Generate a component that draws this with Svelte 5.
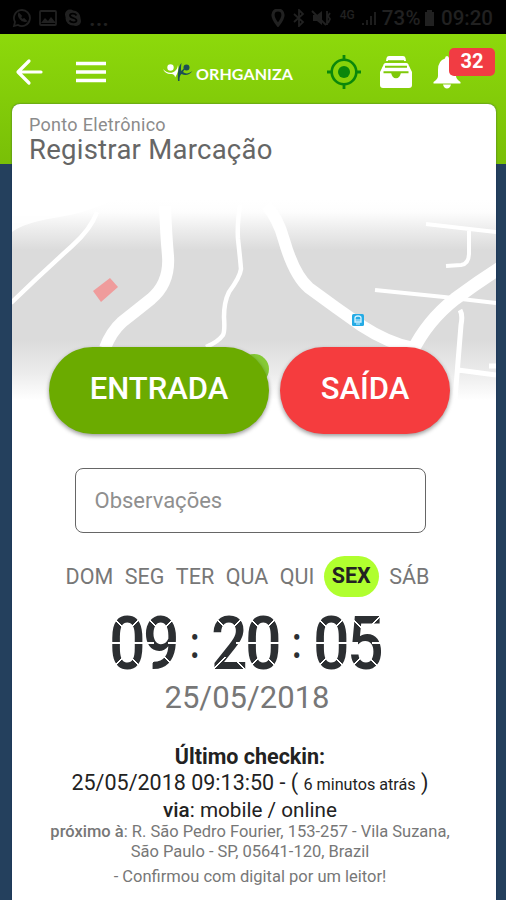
<script lang="ts">
    const days = ['DOM', 'SEG', 'TER', 'QUA', 'QUI', 'SEX', 'SÁB'];
    const today = 'SEX';
    const time = '09:20:05';

    let note = $state('');
    let unread = $state(32);
</script>

<div class="screen">
    <div class="status">
        <div class="status-left">
            <svg width="20" height="20" viewBox="0 0 20 20"><path d="M2 18l1-4a8 8 0 1 1 3 3zM7 6c-1 3 3 8 7 7l-2-2-2 1-2-3 1-1z" /></svg>
            <svg width="18" height="18" viewBox="0 0 18 18"><rect x="1" y="2" width="16" height="14" rx="1" /><path class="solid" d="M2 14l4-5 3 3 3-4 5 6z" /></svg>
            <svg width="18" height="20" viewBox="0 0 18 20"><circle class="solid" cx="6" cy="6.500" r="5" /><circle class="solid" cx="12" cy="13" r="5" /><circle class="solid" cx="9" cy="10" r="7.500" /><path class="cut" d="M12.500 7.500C11 5 6 5 6 7.500c0 3 6.500 2 6.500 5 0 2.500-5.500 2.500-7 0" /></svg>
            <span class="dots">...</span>
        </div>
        <div class="status-right">
            <svg width="14" height="18" viewBox="0 0 14 18"><path class="pin" d="M7 16C3 11 2 9 2 6a5 5 0 0 1 10 0c0 3-1 5-5 10z" /></svg>
            <svg class="bt" width="14" height="18" viewBox="0 0 14 18"><path d="M2 5l9 8-4 4V1l4 4-9 8" /></svg>
            <svg class="mute" width="20" height="18" viewBox="0 0 20 18"><path class="solid" d="M2 6h4l5-4v14l-5-4H2z" /><path d="M1 2l14 14M16 2v14M19 4l-2 3 2 3-2 4" /></svg>
            <span class="net">4G</span>
            <svg width="17" height="18" viewBox="0 0 17 18"><path d="M2 14v2M6 11v5M10 7v9M14 3v13" /></svg>
            <span class="percent">73%</span>
            <svg class="battery" width="11" height="18" viewBox="0 0 11 18"><path class="solid" d="M3 1h5v2h2v14H1V3h2z" /></svg>
            <span>09:20</span>
        </div>
    </div>

    <header class="bar">
        <button class="icon back" aria-label="Voltar">
            <svg width="28" height="28" viewBox="0 0 28 28"><path d="M14 3L3 14l11 11M3.500 14H26" fill="none" stroke="#fff" stroke-width="3.200" stroke-linecap="round" stroke-linejoin="round" /></svg>
        </button>
        <button class="icon menu" aria-label="Menu">
            <svg width="30" height="22" viewBox="0 0 30 22"><path d="M0 2.500h30M0 11h30M0 19.500h30" stroke="#fff" stroke-width="3.400" /></svg>
        </button>
        <div class="brand">
            <svg width="30" height="20" viewBox="0 0 30 20">
                <circle cx="7.500" cy="5.500" r="3.200" fill="#fff" />
                <circle cx="23.500" cy="5.500" r="3" fill="#1d5054" />
                <path d="M0 7c3 4 9 5 12 2 2-2 2.500-3 3-6 1 5-.5 9-3 12.500 0-2-1-3-3-3.500C5 12.500 1.500 11 0 7z" fill="#fff" />
                <path d="M18.500 1c-3 3-4 9-3.500 18h1.500c0-4 .5-6 2-7 4 2 8 1 11-3-4 3-7 3-9.500 1 1-2 2-3 2.500-6-1.500 2-2.500 4-4.500 5 0-3 0-5 .5-8z" fill="#1d5054" />
            </svg>
            <span>ORHGANIZA</span>
        </div>
        <button class="icon target" aria-label="Localização">
            <svg width="34" height="34" viewBox="0 0 34 34"><circle cx="17" cy="17" r="12.300" fill="none" stroke="#0b870b" stroke-width="2.600" /><circle cx="17" cy="17" r="6" fill="#0b870b" /><path d="M17 0v6M17 28v6M0 17h6M28 17h6" stroke="#0b870b" stroke-width="2.800" /></svg>
        </button>
        <button class="icon inbox" aria-label="Arquivo">
            <svg width="34" height="34" viewBox="0 0 34 34">
                <path d="M10 1h14q2 0 2.500 2l.5 3H7l.5-3Q8 1 10 1zM6.500 8h21q1.500 0 2 1.500L30.500 13h-27l1-3.500q.5-1.500 2-1.500z" fill="#fff" />
                <path d="M4 11h26l3 6v13q0 3-3 3H4q-3 0-3-3V17z" fill="#fff" />
                <path d="M9 6.300h16M6 11.800h22M4.500 17.300h25" fill="none" stroke="#7fc909" stroke-width="1.900" />
                <path d="M12 17.300h10q-1 6-5 6t-5-6z" fill="#7fc909" />
            </svg>
        </button>
        <button class="icon bell" aria-label="Notificações">
            <svg width="28" height="34" viewBox="0 0 28 34"><path d="M14 1q2 0 2 2.500 7 2 7 11.500v6q0 3 4.500 6v1.500H.5V27Q5 24 5 21v-6Q5 5.500 12 3.500 12 1 14 1zM10 29.500h8q-1 4-4 4t-4-4z" fill="#fff" /></svg>
            {#if unread > 0}
                <span class="badge">{unread}</span>
            {/if}
        </button>
    </header>

    <main class="card">
        <div class="heading">
            <h2>Ponto Eletrônico</h2>
            <h1>Registrar Marcação</h1>
        </div>

        <div class="map">
            <svg width="484" height="200" viewBox="12 200 484 200">
                <defs>
                    <linearGradient id="land" x1="0" y1="0" x2="0" y2="1">
                        <stop offset="0" stop-color="#fff" />
                        <stop offset=".06" stop-color="#fdfdfd" />
                        <stop offset=".14" stop-color="#eee" />
                        <stop offset=".25" stop-color="#dbdbdb" />
                        <stop offset=".7" stop-color="#dbdbdb" />
                        <stop offset=".86" stop-color="#ebebeb" />
                        <stop offset="1" stop-color="#fff" />
                    </linearGradient>
                </defs>
                <rect x="12" y="200" width="484" height="200" fill="url(#land)" />
                <path d="M12 200h102q-30 14-60 18-30 5-42 14z" fill="#fff" opacity=".85" />
                <g class="roads">
                    <path d="M97 212q-6 17-25 34-30 27-61 57" stroke-width="4.500" />
                    <path d="M165 206q1 27 3 50 2 27-17 43-15 12-29 23-11 10-17 26" stroke-width="12" />
                    <path d="M240 205q-3 20-2 34 2 18 3 30-1 8-12 23-5 10-5 25 1 14-1 18-5 7-17 12" stroke-width="4.500" />
                    <path d="M266 205q12 13 18 35 10 35 25 48 27 20 53 38 26 17 51 22" stroke-width="12" />
                    <path d="M412 352q15-31 43-53 23-17 45-31" stroke-width="13" />
                    <path d="M426 224l70 8M469 231v22q0 11-8 12l-15 1" stroke-width="4" />
                    <path d="M375 290l69 7 52 6" stroke-width="4" />
                    <path d="M460 310q3 5 1 15l-6 74M458 370l38 5M489 366h7" stroke-width="5" />
                </g>
                <path d="M93 291l17-13 8 9-17 15z" fill="#ef9c9c" />
                <circle cx="254" cy="369" r="15" fill="#85c936" />
                <rect x="352" y="314" width="12" height="12" rx="1.500" fill="#25abe5" />
                <path d="M355 322v-4q0-2 3-2t3 2v4z" fill="none" stroke="#d5f2ff" stroke-width="1.300" />
                <path d="M355 320h6M356 324h4" stroke="#d5f2ff" />
            </svg>
        </div>

        <div class="actions">
            <button class="punch in">ENTRADA</button>
            <button class="punch out">SAÍDA</button>
        </div>

        <input class="note" placeholder="Observações" bind:value={note} />

        <div class="days">
            {#each days as day}
                <span class="day" class:today={day === today}>{day}</span>
            {/each}
        </div>

        <div class="clock">
            {#each time as char}
                <span class="cell" class:digit={char !== ':'}><span class="char">{char}</span></span>
            {/each}
        </div>
        <div class="date">25/05/2018</div>

        <div class="last">
            <p class="title"><b>Último checkin:</b></p>
            <p class="when">25/05/2018 09:13:50 - ( <small>6 minutos atrás</small> )</p>
            <p class="via"><b>via</b>: mobile / online</p>
            <p class="place"><b>próximo à</b>: R. São Pedro Fourier, 153-257 - Vila Suzana,<br />São Paulo - SP, 05641-120, Brazil</p>
            <p class="confirm">- Confirmou com digital por um leitor!</p>
        </div>
    </main>
</div>

<style>
    :global(body) { margin: 0; background: #24405d; }
    .screen { width: 506px; height: 900px; overflow: hidden; display: flex; flex-direction: column; font-family: Roboto, "Liberation Sans", sans-serif; background: linear-gradient(#000 0 34px, #8dd90b 34px, #79bf07 164px, #24405d 164px); }
    h1, h2, p { margin: 0; }
    button { border: 0; padding: 0; font-family: inherit; cursor: pointer; }

    .status { height: 34px; flex: none; display: flex; justify-content: space-between; padding: 2px 13px 0 12px; box-sizing: border-box; color: #212121; font-size: 20.5px; font-weight: 500; }
    .status-left, .status-right { display: flex; align-items: center; }
    .status-left { gap: 7px; }
    .status svg { fill: none; stroke: #212121; stroke-width: 1.8; }
    .status .solid { fill: #212121; stroke: none; }
    .status .cut { stroke: #000; }
    .status .pin { stroke-width: 3.2; }
    .dots { font-size: 24px; line-height: 20px; }
    .bt { margin-left: 7px; }
    .mute { margin: 0 9px 0 5px; }
    .net { font-size: 12px; margin: -6px 6px 0 0; }
    .percent { margin-left: 4px; letter-spacing: .3px; }
    .battery { margin: 0 6px 0 3px; }

    .bar { height: 70px; flex: none; display: flex; align-items: center; padding: 5px 0 0 15px; box-sizing: border-box; }
    .icon { display: block; background: none; line-height: 0; position: relative; }
    .menu { margin-left: 33px; }
    .brand { display: flex; align-items: center; margin-left: 57px; color: #fff; font: 700 16px Lato, sans-serif; }
    .brand span { margin: 3px 0 0 3px; letter-spacing: .1px; width: 98px; white-space: nowrap; }
    .target { margin-left: 33px; }
    .inbox { margin-left: 18px; }
    .bell { margin-left: 20px; }
    .badge { position: absolute; left: 16px; top: -7px; width: 46px; height: 28px; border-radius: 5px; background: #f13c43; color: #fff; font-size: 20px; font-weight: 700; line-height: 27px; text-align: center; }

    .card { width: 484px; height: 796px; margin-left: 12px; border-radius: 8px 8px 0 0; background: #fff; box-shadow: 0 0 2px #00165099; display: flex; flex-direction: column; align-items: center; }
    .heading { align-self: stretch; height: 96px; padding: 10px 17px 0; box-sizing: border-box; }
    h2 { font-size: 18px; line-height: 22px; font-weight: 400; color: #8b8b8b; letter-spacing: .3px; }
    h1 { font-size: 27.5px; line-height: 28px; font-weight: 400; color: #666; letter-spacing: .25px; }
    .map { height: 200px; flex: none; }
    .map svg { display: block; }
    .roads { fill: none; stroke: #fff; stroke-linejoin: round; }

    .actions { display: flex; gap: 11px; margin: -53px 9px 0 0; position: relative; }
    .punch { height: 87px; border-radius: 44px; color: #fff; font-size: 31px; font-weight: 500; padding-bottom: 5px; box-shadow: 0 2px 4px #0006; }
    .in { width: 220px; background: #6bab00; }
    .out { width: 170px; background: #f53c3e; }

    .note { width: 351px; height: 65px; margin: 34px 8px 0 0; padding: 0 19px; box-sizing: border-box; border: 1.500px solid #666; border-radius: 8px; font: 400 22px Roboto, sans-serif; background: #fff; outline: 0; }
    .note::placeholder { color: #8f8f8f; opacity: 1; }

    .days { height: 41px; margin: 23px 13px 0 0; display: flex; align-items: center; gap: 11.5px; font-size: 21.5px; color: #777; }
    .day { line-height: 39px; }
    .today { height: 41px; padding: 0 8px; margin: 0 -1px 0 -2px; border-radius: 21px; background: #b0ff2f; color: #222; font-weight: 700; }

    .clock { display: flex; height: 56px; margin: 18px 16px 0 0; font-size: 75px; font-weight: 500; color: #2c2f32; }
    .cell { width: 34px; position: relative; display: flex; justify-content: center; align-items: center; }
    .char { transform: scaleX(.86); line-height: 56px; }
    /* thin gaps that split each digit into display segments */
    .digit::after { content: ''; position: absolute; inset: 0; background:
        linear-gradient(45deg, transparent 47%, #fff 47% 57%, transparent 57%) 1px 1px / 13px 13px no-repeat,
        linear-gradient(-45deg, transparent 47%, #fff 47% 57%, transparent 57%) calc(100% - 1px) 1px / 13px 13px no-repeat,
        linear-gradient(#fff, #fff) 0 50% / 10px 2px no-repeat,
        linear-gradient(#fff, #fff) 100% 50% / 10px 2px no-repeat,
        linear-gradient(-45deg, transparent 47%, #fff 47% 57%, transparent 57%) 1px calc(100% - 1px) / 13px 13px no-repeat,
        linear-gradient(45deg, transparent 47%, #fff 47% 57%, transparent 57%) calc(100% - 1px) calc(100% - 1px) / 13px 13px no-repeat; }
    .cell:not(.digit) .char { font-size: 44px; }

    .date { font-size: 31px; line-height: 38px; margin: 8px 14px 0 0; color: #777; }
    .last { margin: 27px 8px 0 0; text-align: center; color: #222; white-space: nowrap; }
    .title { font-size: 21.5px; line-height: 26px; }
    .when { font-size: 21.5px; line-height: 26px; }
    .when small { font-size: 16.2px; }
    .via { font-size: 20.7px; line-height: 25px; }
    .place { font-size: 16.5px; line-height: 20px; color: #777; margin-top: -1px; }
    .confirm { font-size: 16.5px; line-height: 20px; margin-top: 5px; color: #777; }
    b { font-weight: 500; }
    .title b { font-weight: 700; }
</style>
